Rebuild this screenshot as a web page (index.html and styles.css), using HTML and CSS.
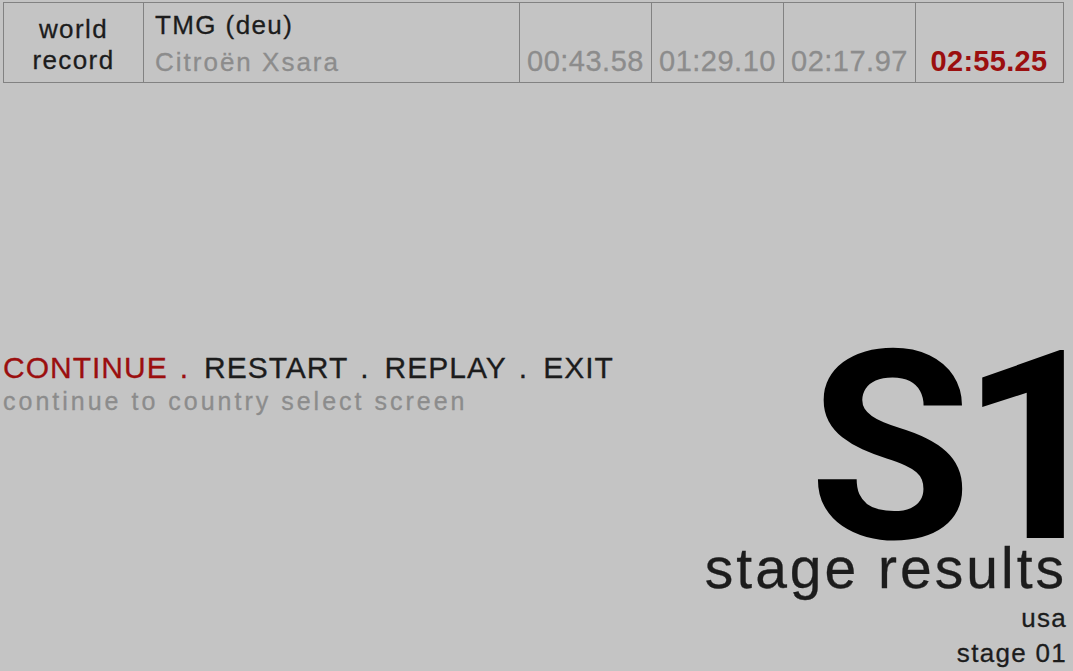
FILE: index.html
```html
<html>
  <head>
    <title>Stage results</title>
    <meta charset="UTF-8">
    <link rel="stylesheet" href="styles.css">
  </head>
  <body>
    <div class="page">
      <div class="record">
        <div class="cell label">world<br>record</div>
        <div class="cell driver">
          <span class="name">TMG (deu)</span>
          <span class="car">Citroën Xsara</span>
        </div>
        <div class="cell split">00:43.58</div>
        <div class="cell split">01:29.10</div>
        <div class="cell split">02:17.97</div>
        <div class="cell split total">02:55.25</div>
      </div>

      <div class="bottom">
        <div class="menu">
          <div class="options">
            <span class="active">CONTINUE</span><span class="sep active">.</span><span>RESTART</span><span class="sep">.</span><span>REPLAY</span><span class="sep">.</span><span>EXIT</span>
          </div>
          <div class="hint">continue to country select screen</div>
        </div>
        <div class="results">
          <div class="stage-id">S<span class="one">1</span></div>
          <div class="heading">stage results</div>
          <div class="info">usa</div>
          <div class="info">stage 01</div>
        </div>
      </div>
    </div>
  </body>
</html>
```

FILE: styles.css
```css
body {
  margin: 0;
  background: #c4c4c4;
  color: #1c1c1c;
  font-family: "Liberation Sans", Arial, sans-serif;
  overflow: hidden;
  -webkit-text-stroke: 0.3px;
}

.page {
  display: flex;
  flex-direction: column;
  height: 100vh;
  padding: 2px 6px 0 3px;
  box-sizing: border-box;
}

/* world record strip */
.record {
  display: grid;
  grid-template-columns: 139px 376px 132px 132px 132px 147px;
  width: 1061px;
  height: 81px;
  box-sizing: border-box;
  border: 1px solid #828282;
}
.cell {
  border-left: 1px solid #828282;
  font-size: 26px;
  letter-spacing: 1.4px;
}
.cell:first-child {
  border-left: none;
}
.label {
  text-align: center;
  line-height: 31px;
  padding-top: 11px;
}
.driver {
  display: flex;
  flex-direction: column;
  line-height: 37px;
  padding: 4px 0 0 11px;
}
.car {
  color: #8c8c8c;
  letter-spacing: 2px;
  line-height: 36px;
}
.split {
  display: flex;
  align-items: flex-end;
  justify-content: center;
  font-size: 29px;
  letter-spacing: 0.5px;
  line-height: 29px;
  padding-bottom: 6px;
  color: #8c8c8c;
}
.split.total {
  color: #9b0f0f;
  font-weight: bold;
  letter-spacing: 0.3px;
  -webkit-text-stroke: 0;
}

/* menu and stage title */
.bottom {
  margin-top: auto;
  display: flex;
  justify-content: space-between;
  align-items: flex-start;
}
.menu {
  margin-top: 2px;
}
.options {
  font-size: 30px;
  line-height: 35px;
  letter-spacing: 1px;
}
.sep {
  margin: 0 15px 0 12px;
}
.active {
  color: #9b0f0f;
}
.hint {
  font-size: 25px;
  line-height: 33px;
  letter-spacing: 3px;
  color: #8c8c8c;
}

.results {
  display: flex;
  flex-direction: column;
  align-items: flex-end;
}
.stage-id {
  font-family: Roboto, "Liberation Sans", sans-serif;
  font-size: 264px;
  font-weight: bold;
  line-height: 199px;
  letter-spacing: -11px;
  color: #000;
  -webkit-text-stroke: 0;
}
.stage-id .one {
  letter-spacing: -45px;
}
.heading {
  font-size: 57px;
  line-height: 48px;
  letter-spacing: 3px;
  margin-top: -3px;
  margin-bottom: 9px;
}
.info {
  font-size: 26px;
  line-height: 35px;
  letter-spacing: 1.3px;
}
```
